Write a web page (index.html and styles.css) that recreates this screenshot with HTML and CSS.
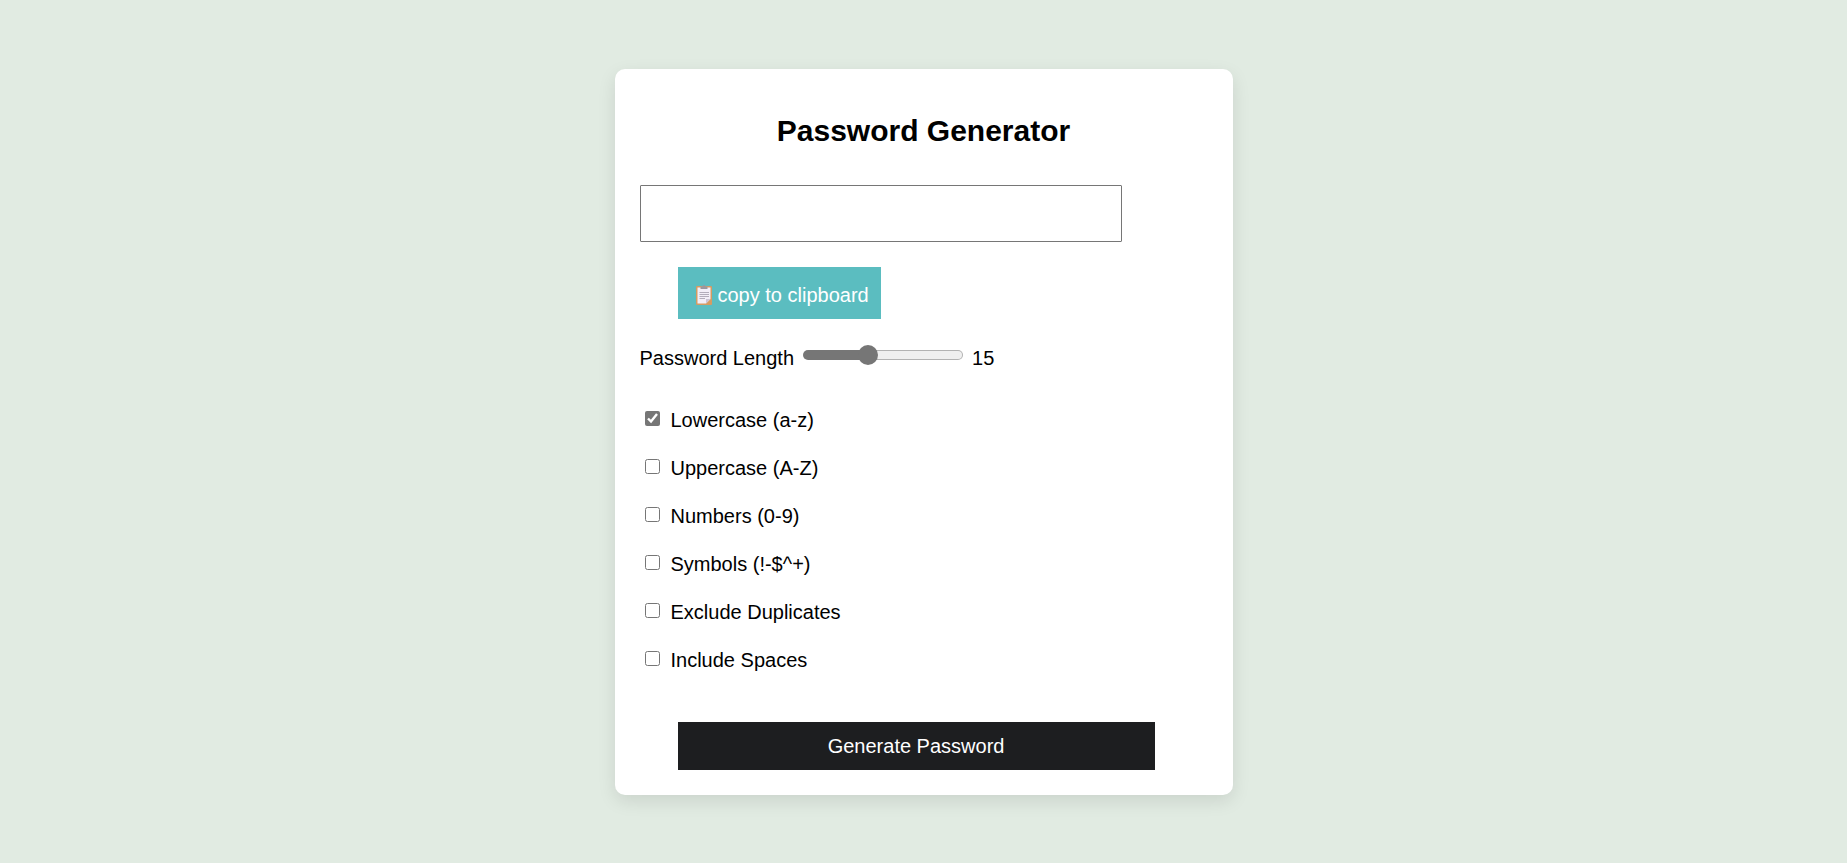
FILE: index.html
```html
<!DOCTYPE html>
<html lang="en">
<head>
<meta charset="utf-8">
<meta name="viewport" content="width=device-width, initial-scale=1">
<title>Password Generator</title>
<link rel="stylesheet" href="styles.css">
</head>
<body>
<main class="card">
  <h1 class="title">Password Generator</h1>
  <input class="output" type="text" aria-label="Generated password" readonly>
  <button class="copy" type="button">
    <svg class="copy-icon" viewBox="0 0 16 20" aria-hidden="true">
      <rect x="0" y="1" width="16" height="19" rx="1" fill="#d59b62"/>
      <path d="M1.500 2.500h13V14l-4.500 4.500H1.500z" fill="#f3eef8"/>
      <path d="M10 18.500V14h4.500z" fill="#cdc4d6"/>
      <path d="M4.500 4V1.500h2a1.500 1.500 0 0 1 3 0h2V4z" fill="#9b979f"/>
      <path d="M3.500 7.500h9.500M3.500 9.500h9.500M3.500 11.500h9.500M3.500 13.500h5.500" stroke="#b3acbb"/>
    </svg>
    <span>copy to clipboard</span>
  </button>
  <div class="length">
    <label for="length">Password Length</label>
    <input class="slider" id="length" type="range" min="4" max="32" value="15">
    <output for="length">15</output>
  </div>
  <div class="options">
    <label class="option"><input class="check" type="checkbox" checked><span>Lowercase (a-z)</span></label>
    <label class="option"><input class="check" type="checkbox"><span>Uppercase (A-Z)</span></label>
    <label class="option"><input class="check" type="checkbox"><span>Numbers (0-9)</span></label>
    <label class="option"><input class="check" type="checkbox"><span>Symbols (!-$^+)</span></label>
    <label class="option"><input class="check" type="checkbox"><span>Exclude Duplicates</span></label>
    <label class="option"><input class="check" type="checkbox"><span>Include Spaces</span></label>
  </div>
  <button class="generate" type="button">Generate Password</button>
</main>
</body>
</html>
```
FILE: styles.css
```css
* {
  box-sizing: border-box;
}

body {
  margin: 0;
  min-height: 100vh;
  display: flex;
  align-items: center;
  justify-content: center;
  background: #e1ebe2;
  color: #000;
  font: 20px/24px "Liberation Sans", Arial, sans-serif;
}

.card {
  display: flex;
  flex-direction: column;
  align-items: flex-start;
  width: 100%;
  max-width: 618px;
  padding: 25px;
  border-radius: 10px;
  background: #fff;
  box-shadow: 0 6px 18px rgba(0, 0, 0, 0.1);
}

.title {
  align-self: stretch;
  margin: 19px 0 36px;
  font-size: 30px;
  line-height: 36px;
  text-align: center;
}

.output {
  width: 85%;
  height: 57px;
  padding: 12px;
  border: 1px solid #767676;
  border-radius: 1px;
  background: #fff;
  font: inherit;
}

.copy,
.generate {
  margin-left: 38px;
  border: 0;
  color: #fff;
  font: inherit;
  cursor: pointer;
}

.copy {
  display: flex;
  align-items: center;
  gap: 6px;
  margin-top: 25px;
  padding: 16px 12px 12px 18px;
  background: #5bbdc0;
}

.copy-icon {
  width: 16px;
  height: 20px;
}

.length {
  display: flex;
  align-items: center;
  gap: 9px;
  margin-top: 26px;
}

.slider {
  appearance: none;
  width: 160px;
  height: 20px;
  margin: 0 0 6px;
  background: none;
}

.slider::-webkit-slider-runnable-track {
  height: 10px;
  border: 1px solid transparent;
  border-radius: 5px;
  background:
    linear-gradient(#767676, #767676) left / 40% 100% no-repeat border-box,
    linear-gradient(#efefef, #efefef) padding-box,
    linear-gradient(#b2b2b2, #b2b2b2) border-box;
}

.slider::-webkit-slider-thumb {
  appearance: none;
  width: 20px;
  height: 20px;
  margin-top: -6px;
  border-radius: 50%;
  background: #767676;
}

.options {
  margin-top: 25px;
}

.option {
  display: flex;
  align-items: center;
  gap: 11px;
  height: 48px;
  padding-left: 5px;
}

.check {
  width: 15px;
  height: 15px;
  margin: 0 0 2px;
  accent-color: #767676;
}

.generate {
  width: 84%;
  margin-top: 38px;
  padding: 12px;
  background: #1d1e20;
}
```
